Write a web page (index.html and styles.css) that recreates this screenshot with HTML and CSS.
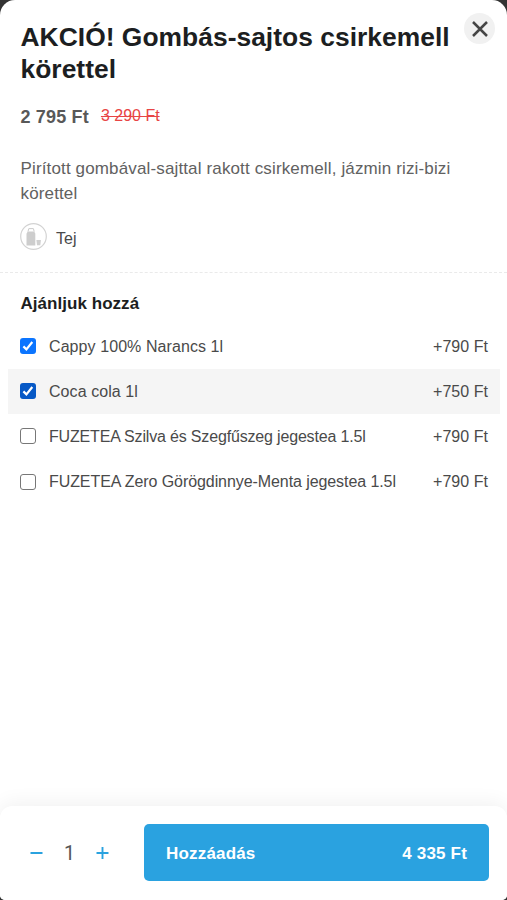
FILE: index.html
```html
<!DOCTYPE html>
<html lang="hu">
<head>
<meta charset="utf-8">
<title>AKCIÓ! Gombás-sajtos csirkemell körettel</title>
<link rel="stylesheet" href="styles.css">
</head>
<body>
<main class="sheet">
  <button class="close" aria-label="Bezárás"><svg width="16" height="16" viewBox="0 0 16 16"><path d="M1 1 15 15M15 1 1 15"/></svg></button>
  <section class="intro">
    <h1>AKCIÓ! Gombás-sajtos csirkemell<br>körettel</h1>
    <div class="prices"><span class="price">2 795 Ft</span><s class="old">3 290 Ft</s></div>
    <p class="desc">Pirított gombával-sajttal rakott csirkemell, jázmin rizi-bizi<br>körettel</p>
    <div class="allergen">
      <svg width="27" height="27" viewBox="0 0 27 27"><circle cx="13.5" cy="13.5" r="12.8" fill="#fff" stroke="#d3d3d3" stroke-width="1.2"/><path d="M8 8.5 8.8 5.6h4.6l.8 2.9" fill="#fff" stroke="#ccc"/><path d="M7.7 8.6h6.6l1 2.2v11.6H6.5V10.8z" fill="#cdcdcd"/><path d="M16.4 17h4.5l-.6 5.2h-3.3z" fill="#d0d0d0"/></svg>
      <span>Tej</span>
    </div>
  </section>
  <section class="extras">
    <h2>Ajánljuk hozzá</h2>
    <label class="row"><span class="box on"><svg width="16" height="16" viewBox="0 0 16 16"><path d="M3.4 8.4 6.4 11.4 12.3 4"/></svg></span><span class="name n1">Cappy 100% Narancs 1l</span><span class="add">+790 Ft</span></label>
    <label class="row active"><span class="box on"><svg width="16" height="16" viewBox="0 0 16 16"><path d="M3.4 8.4 6.4 11.4 12.3 4"/></svg></span><span class="name n2">Coca cola 1l</span><span class="add">+750 Ft</span></label>
    <label class="row"><span class="box"></span><span class="name n3">FUZETEA Szilva és Szegfűszeg jegestea 1.5l</span><span class="add">+790 Ft</span></label>
    <label class="row"><span class="box"></span><span class="name n4">FUZETEA Zero Görögdinnye-Menta jegestea 1.5l</span><span class="add">+790 Ft</span></label>
  </section>
  <footer class="bar">
    <div class="qty">
      <button aria-label="Kevesebb"><svg width="13" height="12" viewBox="0 0 13 12"><path d="M.5 6h12"/></svg></button>
      <span class="count">1</span>
      <button aria-label="Több"><svg width="13" height="12" viewBox="0 0 13 12"><path d="M.5 6h12M6.5 0v12"/></svg></button>
    </div>
    <button class="submit"><span class="label">Hozzáadás</span><span class="total">4 335 Ft</span></button>
  </footer>
</main>
</body>
</html>
```
FILE: styles.css
```css
* { box-sizing: border-box; }
body { margin: 0; background: #333; font-family: "Liberation Sans", Arial, sans-serif; color: #4a4a4a; }
button { border: 0; padding: 0; background: none; font: inherit; }
svg { display: block; }
h1, h2, p { margin: 0; }
.sheet { position: relative; display: flex; flex-direction: column; height: 900px; background: #fff; border-radius: 15px 15px 5px 5px; overflow: hidden; }
.close { position: absolute; left: 464px; top: 13px; width: 31px; height: 31px; border-radius: 50%; background: #f1f1f1; display: flex; align-items: center; justify-content: center; }
.close path { stroke: #454545; stroke-width: 2.5; fill: none; }
.intro { height: 273px; padding: 21px 20px 0 20.5px; border-bottom: 1px dashed #eaeaea; }
h1 { font-size: 26.4px; line-height: 32px; color: #1c1e21; white-space: nowrap; letter-spacing: .03px; }
.prices { display: flex; gap: 12px; margin-top: 19px; height: 24px; line-height: 26px; white-space: nowrap; }
.price { font-size: 18px; font-weight: 700; color: #585858; letter-spacing: .17px; }
.old { font-size: 16px; line-height: 24px; color: #e84545; }
.desc { margin-top: 28px; font-size: 17px; line-height: 25px; color: #616161; white-space: nowrap; letter-spacing: .14px; }
.allergen { display: flex; align-items: center; gap: 9px; margin-top: 17px; margin-left: -.5px; font-size: 16px; }
.allergen span { padding-top: 5px; }
.extras { flex: 1; padding-top: 18.5px; }
h2 { font-size: 17px; line-height: 24px; padding-left: 20.5px; color: #1c1e21; letter-spacing: .04px; }
.row { display: flex; align-items: center; height: 45.2px; margin: 0 7px 0 8px; padding: 0 12px; font-size: 16px; white-space: nowrap; }
h2 + .row { margin-top: 8px; }
.active { background: #f5f5f5; }
.box { width: 16px; height: 16px; margin-right: 13px; border: 1px solid #777; border-radius: 3px; background: #fff; }
.on { border: 0; background: #0b75ff; }
.active .on { background: #0759c6; }
.on path { fill: none; stroke: #fff; stroke-width: 2.2; }
.name, .add { padding-top: 1px; }
.n1 { letter-spacing: .08px; }
.n2 { letter-spacing: .07px; }
.n3 { letter-spacing: -.17px; }
.n4 { letter-spacing: -.08px; }
.add { margin-left: auto; letter-spacing: .04px; }
.bar { display: flex; height: 94px; padding: 18px 18px 0 30px; background: #fff; border-radius: 12px 12px 0 0; box-shadow: 0 -3px 20px rgba(0,0,0,.06); }
.qty { display: flex; align-items: center; width: 114px; height: 58px; gap: 20px; }
.qty button { width: 13px; }
.qty path { stroke: #2aa2df; stroke-width: 1.9; fill: none; }
.count { font: 19.5px Roboto, sans-serif; width: 13px; text-align: center; color: #555; }
.submit { flex: 1; height: 57px; border-radius: 5px; background: #2aa2e0; color: #fff; display: flex; align-items: center; justify-content: space-between; padding: 2px 22px 0; font-size: 17px; font-weight: 700; }
.label, .total { letter-spacing: .18px; }
```
